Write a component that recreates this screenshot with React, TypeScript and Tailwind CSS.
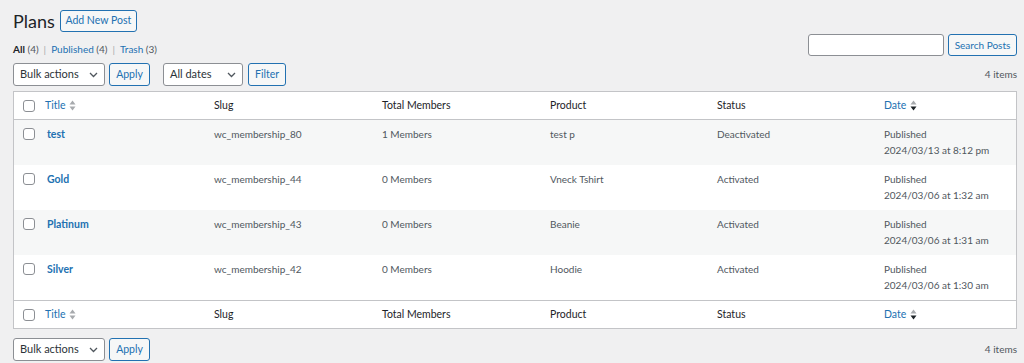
const rows = [
  { title: "test", slug: "wc_membership_80", members: "1 Members", product: "test p", status: "Deactivated", date: "2024/03/13 at 8:12 pm" },
  { title: "Gold", slug: "wc_membership_44", members: "0 Members", product: "Vneck Tshirt", status: "Activated", date: "2024/03/06 at 1:32 am" },
  { title: "Platinum", slug: "wc_membership_43", members: "0 Members", product: "Beanie", status: "Activated", date: "2024/03/06 at 1:31 am" },
  { title: "Silver", slug: "wc_membership_42", members: "0 Members", product: "Hoodie", status: "Activated", date: "2024/03/06 at 1:30 am" },
];

const cols = "grid grid-cols-[23px_169px_168px_168px_167px_167px_1fr]";

function Checkbox() {
  return <span className="block h-[12px] w-[12px] rounded-[3px] border border-[#8c8f94] bg-white" />;
}

function SortIcon({ active }: { active?: boolean }) {
  return (
    <svg width="7" height="11" viewBox="0 0 7 11" className="ml-[4px] inline-block">
      <path d="M3.5 0.5 L6.5 4.5 L0.5 4.5 Z" fill="#a7aaad" />
      <path d="M0.5 6.5 L6.5 6.5 L3.5 10.5 Z" fill={active ? "#1d2327" : "#a7aaad"} />
    </svg>
  );
}

function Select({ label, width }: { label: string; width: string }) {
  return (
    <div className={`flex h-[23px] ${width} items-center justify-between rounded-[3px] border border-[#8c8f94] bg-white pl-[6px] pr-[6px] text-[11px] text-[#2c3338]`}>
      <span>{label}</span>
      <svg width="9" height="6" viewBox="0 0 9 6">
        <path d="M1 1 L4.5 4.5 L8 1" stroke="#50575e" strokeWidth="1.3" fill="none" />
      </svg>
    </div>
  );
}

function Button({ label, width }: { label: string; width: string }) {
  return (
    <div className={`flex h-[23px] ${width} items-center justify-center rounded-[3px] border border-[#2271b1] bg-[#f6f7f7] text-[10.5px] text-[#2271b1]`}>
      {label}
    </div>
  );
}

function HeadRow({ top }: { top?: boolean }) {
  return (
    <div className={`${cols} h-[28px] items-center text-[10.5px] text-[#1d2327] ${top ? "border-b border-[#c3c4c7]" : "border-t border-[#c3c4c7]"}`}>
      <div className="pl-[9px]"><Checkbox /></div>
      <div className="flex items-center pl-[8px] text-[#2271b1]">Title<SortIcon /></div>
      <div className="pl-[8px]">Slug</div>
      <div className="pl-[8px]">Total Members</div>
      <div className="pl-[8px]">Product</div>
      <div className="pl-[8px]">Status</div>
      <div className="flex items-center pl-[8px] text-[#2271b1]">Date<SortIcon active /></div>
    </div>
  );
}

export default function App() {
  return (
    <div className="min-h-[363px] bg-[#f0f0f1] pl-[13px] pr-[7px] pt-[10px] font-['Lato',sans-serif] text-[10px] text-[#50575e]">
      <div className="flex h-[21px] items-center">
        <h1 className="text-[18px] leading-none text-[#1d2327]">Plans</h1>
        <div className="ml-[5px] flex h-[22px] w-[77px] items-center justify-center rounded-[3px] border border-[#2271b1] bg-[#f6f7f7] text-[10.5px] text-[#2271b1]">
          Add New Post
        </div>
      </div>

      <div className="mt-[3px] flex items-end justify-between">
        <div className="pb-[1px] text-[10px] leading-[12px]">
          <span className="font-bold text-[#1d2327]">All</span> (4)
          <span className="mx-[5px] text-[#a7aaad]">|</span>
          <span className="text-[#2271b1]">Published</span> (4)
          <span className="mx-[5px] text-[#a7aaad]">|</span>
          <span className="text-[#2271b1]">Trash</span> (3)
        </div>
        <div className="flex gap-[4px]">
          <div className="h-[22px] w-[136px] rounded-[3px] border border-[#8c8f94] bg-white" />
          <div className="flex h-[22px] w-[69px] items-center justify-center rounded-[3px] border border-[#2271b1] bg-[#f6f7f7] text-[10px] text-[#2271b1]">
            Search Posts
          </div>
        </div>
      </div>

      <div className="mt-[7px] flex h-[23px] items-center justify-between">
        <div className="flex items-center">
          <Select label="Bulk actions" width="w-[92px]" />
          <div className="ml-[4px]"><Button label="Apply" width="w-[41px]" /></div>
          <div className="ml-[13px]"><Select label="All dates" width="w-[80px]" /></div>
          <div className="ml-[5px]"><Button label="Filter" width="w-[38px]" /></div>
        </div>
        <span className="text-[10px]">4 items</span>
      </div>

      <div className="mt-[5px] border border-[#c3c4c7] bg-white">
        <HeadRow top />
        {rows.map((r, i) => (
          <div key={r.title} className={`${cols} h-[45px] items-start pt-[6px] leading-[16px] ${i % 2 === 0 ? "bg-[#f6f7f7]" : "bg-white"}`}>
            <div className="pl-[9px] pt-[2px]"><Checkbox /></div>
            <div className="pl-[10px] text-[10.5px] font-bold text-[#2271b1]">{r.title}</div>
            <div className="pl-[8px]">{r.slug}</div>
            <div className="pl-[8px]">{r.members}</div>
            <div className="pl-[8px]">{r.product}</div>
            <div className="pl-[8px]">{r.status}</div>
            <div className="pl-[8px]">
              <div>Published</div>
              <div>{r.date}</div>
            </div>
          </div>
        ))}
        <HeadRow />
      </div>

      <div className="mt-[9px] flex h-[23px] items-center justify-between">
        <div className="flex items-center">
          <Select label="Bulk actions" width="w-[92px]" />
          <div className="ml-[4px]"><Button label="Apply" width="w-[41px]" /></div>
        </div>
        <span className="text-[10px]">4 items</span>
      </div>
    </div>
  );
}
